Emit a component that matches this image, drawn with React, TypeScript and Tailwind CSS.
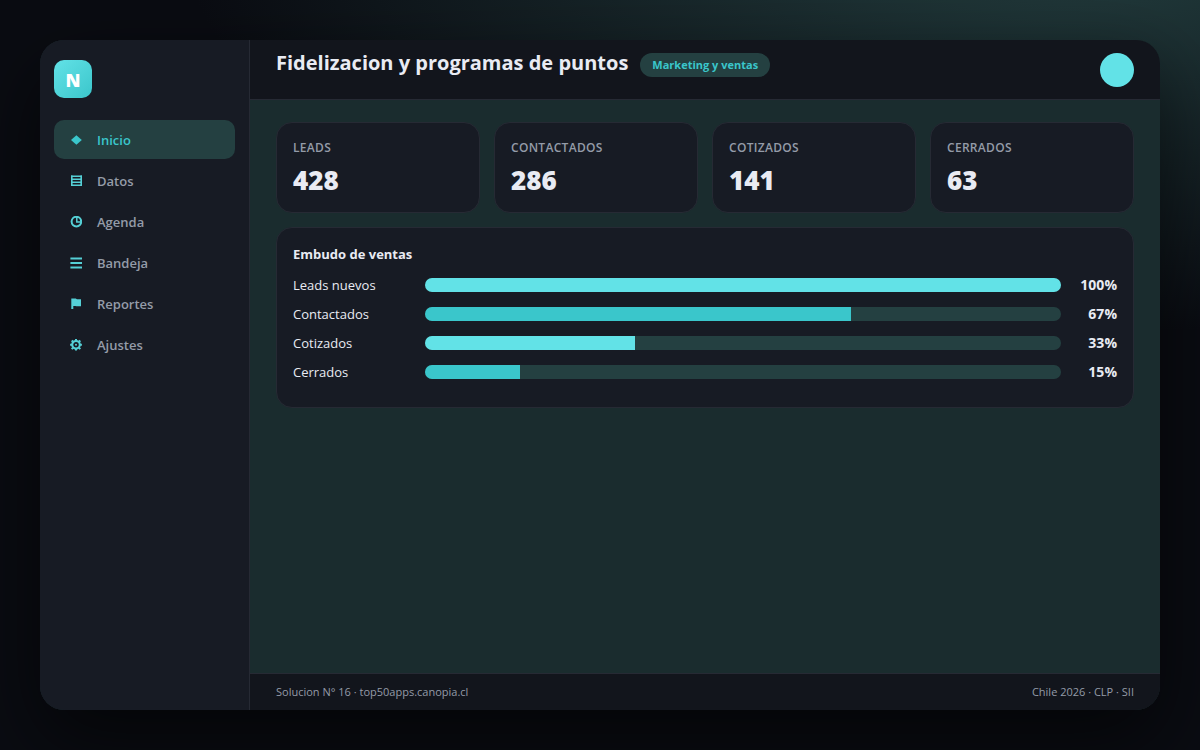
import React, { useState } from 'react';

type IconName = 'diamond' | 'rows' | 'clock' | 'menu' | 'flag' | 'gear';

const navItems: { label: string; icon: IconName }[] = [
  { label: 'Inicio', icon: 'diamond' },
  { label: 'Datos', icon: 'rows' },
  { label: 'Agenda', icon: 'clock' },
  { label: 'Bandeja', icon: 'menu' },
  { label: 'Reportes', icon: 'flag' },
  { label: 'Ajustes', icon: 'gear' },
];

const stats = [
  { label: 'Leads', value: 428 },
  { label: 'Contactados', value: 286 },
  { label: 'Cotizados', value: 141 },
  { label: 'Cerrados', value: 63 },
];

const funnel = [
  { label: 'Leads nuevos', pct: 100 },
  { label: 'Contactados', pct: 67 },
  { label: 'Cotizados', pct: 33 },
  { label: 'Cerrados', pct: 15 },
];

function NavIcon({ name }: { name: IconName }) {
  return (
    <svg viewBox="0 0 12 12" className="w-3 h-3" fill="none" stroke="currentColor" aria-hidden="true">
      {name === 'diamond' && <path d="M6.4 1.2 11.8 6 6.4 10.8 1 6Z" fill="currentColor" stroke="none" />}
      {name === 'rows' && (
        <>
          <path d="M1.8 .5v10.5M11.2 .5v10.5" strokeWidth="1.6" />
          <path d="M1 1.2h11M1 4.2h11M1 7.2h11M1 10.2h11" strokeWidth="1.4" />
        </>
      )}
      {name === 'clock' && (
        <>
          <circle cx="6.4" cy="5.6" r="4.8" strokeWidth="2" />
          <path d="M6.8 1v5h4.6" strokeWidth="1.5" />
        </>
      )}
      {name === 'menu' && <path d="M.4 1.5h11.6M.4 6h11.6M.4 10.5h11.6" strokeWidth="2" />}
      {name === 'flag' && <path d="M1.3 .6h4.4l1.3.7H11v7H6.4L5.2 7.9H3.3V11H1.3Z" fill="currentColor" stroke="none" />}
      {name === 'gear' && (
        <>
          <circle cx="6" cy="5.8" r="3.8" strokeWidth="2.1" />
          <circle cx="6" cy="5.8" r="1" fill="currentColor" stroke="none" />
          <path d="M6 0v2M6 9.6v2M.1 5.8h2M9.9 5.8h2M1.7 1.5l1.3 1.3M9 8.8l1.3 1.3M1.7 10.1l1.3-1.3M9 2.8l1.3-1.3" strokeWidth="2" />
        </>
      )}
    </svg>
  );
}

function App() {
  const [active, setActive] = useState('Inicio');

  return (
    <div className="min-h-screen p-10 flex font-['Open_Sans','Noto_Sans',sans-serif] text-[#e9ebf3] bg-[#0a0c12] bg-[radial-gradient(1500px_680px_at_90%_-10%,#243f40,transparent_60%)]">
      <div className="flex-1 flex rounded-3xl overflow-hidden bg-[#1a2c2e] shadow-[0_30px_80px_rgba(0,0,0,0.6)]">
        {/* Sidebar */}
        <aside className="w-[210px] shrink-0 bg-[#171b24] border-r border-[#262a34] px-3.5 py-5">
          <div className="w-[38px] h-[38px] pt-0.5 rounded-[10px] bg-linear-135 from-[#62e2e7] to-[#3ac6cb] flex items-center justify-center text-white text-lg font-extrabold">
            N
          </div>
          <nav className="mt-[22px] flex flex-col gap-0.5">
            {navItems.map((item) => (
              <button
                key={item.label}
                type="button"
                onClick={() => setActive(item.label)}
                className={`h-[39px] px-[13px] rounded-[10px] flex items-center gap-3 text-[13px] font-semibold cursor-pointer ${
                  active === item.label ? 'bg-[#244041] text-[#3ac6cb]' : 'text-[#949ba8]'
                }`}
              >
                <span className={`w-[18px] flex justify-center ${active === item.label ? 'text-[#3ac6cb]' : 'text-[#55d0d6]'}`}>
                  <NavIcon name={item.icon} />
                </span>
                <span className="pt-0.5">{item.label}</span>
              </button>
            ))}
          </nav>
        </aside>

        <div className="flex-1 min-w-0 flex flex-col">
          {/* Header */}
          <header className="h-[60px] px-[26px] bg-[#12151c] border-b border-[#262a34] flex items-center justify-between">
            <div className="h-[34px] flex items-start gap-3">
              <h1 className="text-xl leading-5 font-bold">Fidelizacion y programas de puntos</h1>
              <span className="h-6 px-3 rounded-full bg-[#244041] text-[#3ac6cb] text-[11px] leading-6 font-bold">Marketing y ventas</span>
            </div>
            <div className="w-[34px] h-[34px] rounded-full bg-[#62e2e7]" />
          </header>

          {/* Main Content */}
          <main className="flex-1 px-[26px] py-[22px] flex flex-col gap-3.5">
            <section className="grid grid-cols-4 gap-3.5">
              {stats.map((s) => (
                <div key={s.label} className="bg-[#171b24] border border-[#262a34] rounded-2xl px-4 pt-4 pb-3.5">
                  <div className="text-xs leading-[18px] font-semibold uppercase tracking-wide text-[#949ba8]">{s.label}</div>
                  <div className="mt-1.5 text-[26px] leading-[35px] font-extrabold">{s.value}</div>
                </div>
              ))}
            </section>

            <section className="bg-[#171b24] border border-[#262a34] rounded-2xl px-4 pt-[17px] pb-[25px]">
              <h2 className="text-[13px] leading-[18px] font-bold mb-3">Embudo de ventas</h2>
              <div className="flex flex-col gap-[9px]">
                {funnel.map((row, i) => (
                  <div key={row.label} className="flex items-center leading-5">
                    <span className="w-[132px] text-[13px]">{row.label}</span>
                    <div className="flex-1 h-3.5 rounded-full overflow-hidden bg-[#244041]">
                      <div className={`h-full ${i % 2 === 0 ? 'bg-[#62e2e7]' : 'bg-[#3ac6cb]'}`} style={{ width: `${row.pct}%` }} />
                    </div>
                    <span className="w-14 text-right text-sm font-bold">{row.pct}%</span>
                  </div>
                ))}
              </div>
            </section>
          </main>

          {/* Footer */}
          <footer className="h-[37px] px-[26px] bg-[#12151c] border-t border-[#262a34] flex items-center justify-between text-[11px] text-[#949ba8]">
            <span>Solucion N° 16 · top50apps.canopia.cl</span>
            <span>Chile 2026 · CLP · SII</span>
          </footer>
        </div>
      </div>
    </div>
  );
}

export default App;
